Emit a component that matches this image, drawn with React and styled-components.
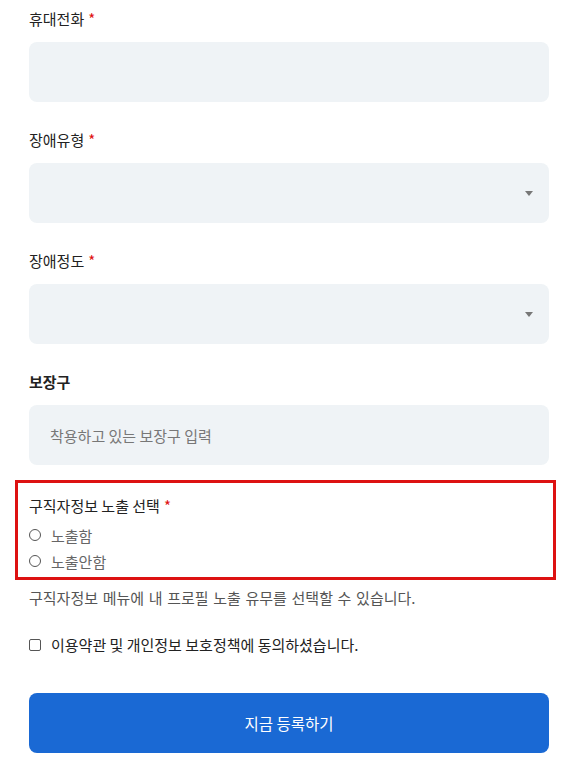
import React from "react";
import styled, { createGlobalStyle } from "styled-components";

const Global = createGlobalStyle`
  html, body { margin: 0; padding: 0; background: #fff; }
  body { font-family: "Noto Sans CJK KR", "Noto Sans", sans-serif; color: #222; }
  * { box-sizing: border-box; }
`;

const Page = styled.div`
  width: 577px;
  padding: 8px 28px 0 29px;
`;

const Field = styled.div`
  display: flex;
  flex-direction: column;
  gap: 12px;
  margin-bottom: 27px;
`;

const Label = styled.label`
  font-size: 15px;
  line-height: 22px;
  font-weight: ${(p) => (p.$bold ? 700 : 400)};
  color: #222;
`;

const Star = styled.span`
  color: #e01010;
  margin-left: 4px;
`;

const Input = styled.input`
  width: 100%;
  height: 60px;
  border: none;
  border-radius: 8px;
  background: #eff3f6;
  padding: 0 21px;
  font-family: inherit;
  font-size: 15px;
  color: #333;
  outline: none;
  &::placeholder { color: #777; }
`;

const SelectBox = styled.div`
  height: 60px;
  border-radius: 8px;
  background: #eff3f6;
  display: flex;
  align-items: center;
  justify-content: flex-end;
  padding-right: 16px;
`;

const Caret = styled.span`
  width: 0;
  height: 0;
  border-left: 4px solid transparent;
  border-right: 4px solid transparent;
  border-top: 5px solid #777;
  margin-top: 1px;
`;

const Highlight = styled.div`
  margin: -12px -7px 0 -14px;
  border: 3px solid #dd1111;
  padding: 12px 11px 3px;
  display: flex;
  flex-direction: column;
`;

const GroupTitle = styled.div`
  font-size: 15px;
  line-height: 22px;
  color: #222;
  margin-bottom: 5px;
`;

const RadioRow = styled.label`
  display: flex;
  align-items: center;
  gap: 10px;
  height: 26px;
  font-size: 15px;
  color: #666;
`;

const RadioCircle = styled.span`
  width: 12px;
  height: 12px;
  border-radius: 50%;
  border: 1px solid #555;
  background: #fff;
  flex: none;
`;

const Help = styled.p`
  margin: 7px 0 0;
  font-size: 15px;
  line-height: 22px;
  word-spacing: 1.3px;
  color: #555;
`;

const AgreeRow = styled.label`
  display: flex;
  align-items: center;
  gap: 10px;
  margin-top: 25px;
  font-size: 15px;
  line-height: 22px;
  color: #222;
`;

const Check = styled.span`
  width: 12px;
  height: 12px;
  border: 1px solid #555;
  border-radius: 2px;
  background: #fff;
  flex: none;
`;

const Submit = styled.button`
  margin-top: 37px;
  width: 100%;
  height: 60px;
  border: none;
  border-radius: 8px;
  background: #1a69d4;
  color: #fff;
  font-family: inherit;
  font-size: 15.5px;
  cursor: pointer;
`;

export default function App() {
  return (
    <>
      <Global />
      <Page>
        <Field>
          <Label>휴대전화<Star>*</Star></Label>
          <Input type="text" />
        </Field>
        <Field>
          <Label>장애유형<Star>*</Star></Label>
          <SelectBox><Caret /></SelectBox>
        </Field>
        <Field>
          <Label>장애정도<Star>*</Star></Label>
          <SelectBox><Caret /></SelectBox>
        </Field>
        <Field>
          <Label $bold>보장구</Label>
          <Input type="text" placeholder="착용하고 있는 보장구 입력" />
        </Field>
        <Highlight>
          <GroupTitle>구직자정보 노출 선택<Star>*</Star></GroupTitle>
          <RadioRow><RadioCircle />노출함</RadioRow>
          <RadioRow><RadioCircle />노출안함</RadioRow>
        </Highlight>
        <Help>구직자정보 메뉴에 내 프로필 노출 유무를 선택할 수 있습니다.</Help>
        <AgreeRow><Check />이용약관 및 개인정보 보호정책에 동의하셨습니다.</AgreeRow>
        <Submit>지금 등록하기</Submit>
      </Page>
    </>
  );
}
